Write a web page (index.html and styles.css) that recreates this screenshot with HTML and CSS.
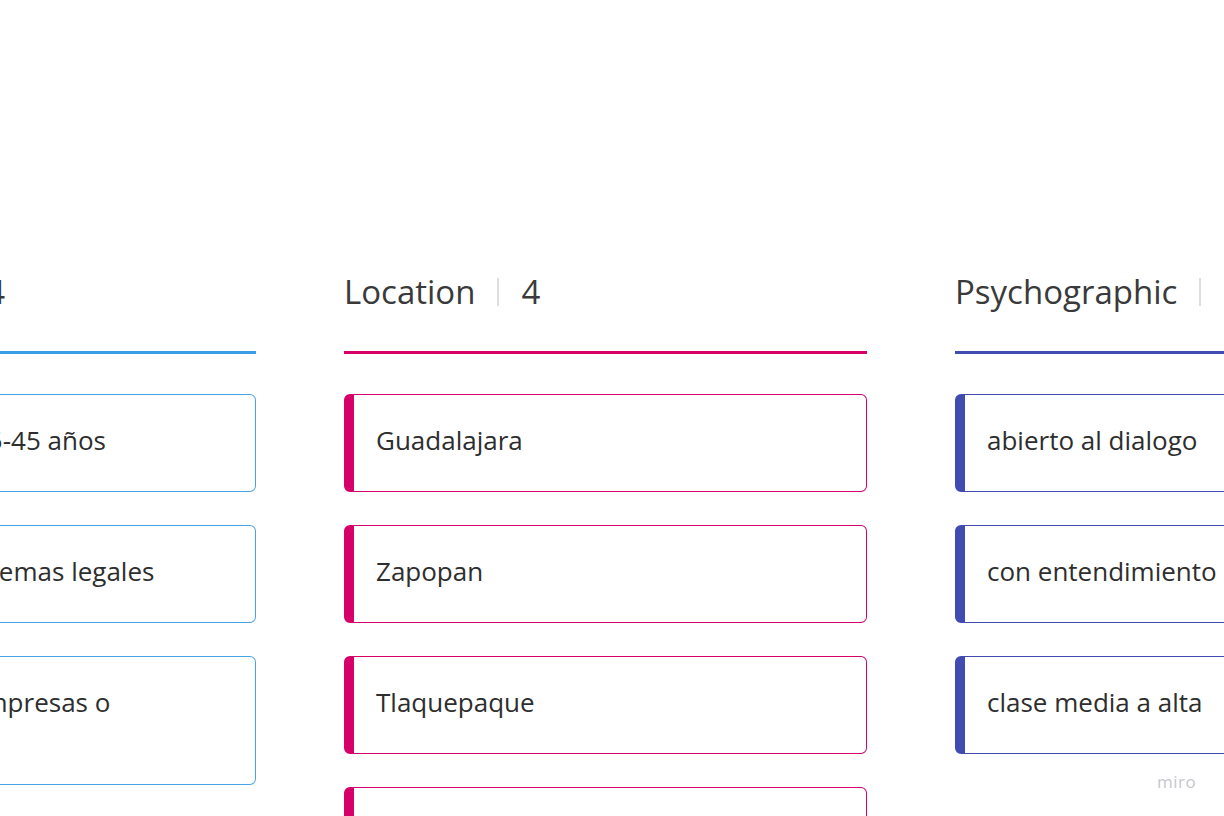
FILE: index.html
```html
<!DOCTYPE html>
<html lang="es">
<head>
<meta charset="utf-8">
<title>Board</title>
<link rel="stylesheet" href="styles.css">
</head>
<body>
<div class="board">
  <section class="col col-blue">
    <header class="col-head"><span class="col-title">Demographic</span><span class="sep"></span><span class="count">4</span></header>
    <div class="cards">
      <div class="card">Adultos de entre 25-45 años</div>
      <div class="card">Personas con problemas legales</div>
      <div class="card">Trabajadores de empresas o independientes</div>
      <div class="card">Nivel socioeconómico medio</div>
    </div>
  </section>
  <section class="col col-pink">
    <header class="col-head"><span class="col-title">Location</span><span class="sep"></span><span class="count">4</span></header>
    <div class="cards">
      <div class="card">Guadalajara</div>
      <div class="card">Zapopan</div>
      <div class="card">Tlaquepaque</div>
      <div class="card">Tonalá</div>
    </div>
  </section>
  <section class="col col-indigo">
    <header class="col-head"><span class="col-title">Psychographic</span><span class="sep"></span><span class="count">3</span></header>
    <div class="cards">
      <div class="card">abierto al dialogo</div>
      <div class="card">con entendimiento</div>
      <div class="card">clase media a alta</div>
    </div>
  </section>
</div>
<div class="miro">miro</div>
</body>
</html>
```
FILE: styles.css
```css
html, body {
  margin: 0;
  padding: 0;
  width: 1224px;
  height: 816px;
  overflow: hidden;
  background: #ffffff;
  font-family: "Open Sans", "Noto Sans", sans-serif;
  color: #333333;
}

.board {
  display: flex;
  gap: 88px;
  margin-left: -267px;
  padding-top: 270px;
}

.col {
  flex: 0 0 523px;
  width: 523px;
}

.col-head {
  display: flex;
  align-items: center;
  height: 44px;
  padding-bottom: 37px;
  border-bottom: 3px solid #2d9bf0;
  font-size: 33px;
  line-height: 44px;
  color: #3a3a3a;
}

.sep {
  width: 2px;
  height: 28px;
  background: #dedede;
  margin: 0 22px 0 22px;
}

.cards {
  display: flex;
  flex-direction: column;
  gap: 33px;
  padding-top: 40px;
}

.card {
  border: 1px solid #2d9bf0;
  border-left-width: 10px;
  border-radius: 6px;
  padding: 30px 24px 35px 22px;
  font-size: 26px;
  line-height: 31px;
  color: #2e2e2e;
}

.col-blue .col-head { border-bottom-color: #3b9ee8; }
.col-blue .card { border-color: #4aa3e6; }

.col-pink .col-head { border-bottom-color: #d6006a; }
.col-pink .card { border-color: #d6006a; }

.col-indigo .col-head { border-bottom-color: #414bb2; }
.col-indigo .card { border-color: #414bb2; }

.miro {
  position: absolute;
  left: 1157px;
  top: 770px;
  font-size: 17px;
  letter-spacing: 0.5px;
  color: #c7c7cc;
  font-family: "Open Sans", sans-serif;
}
```
